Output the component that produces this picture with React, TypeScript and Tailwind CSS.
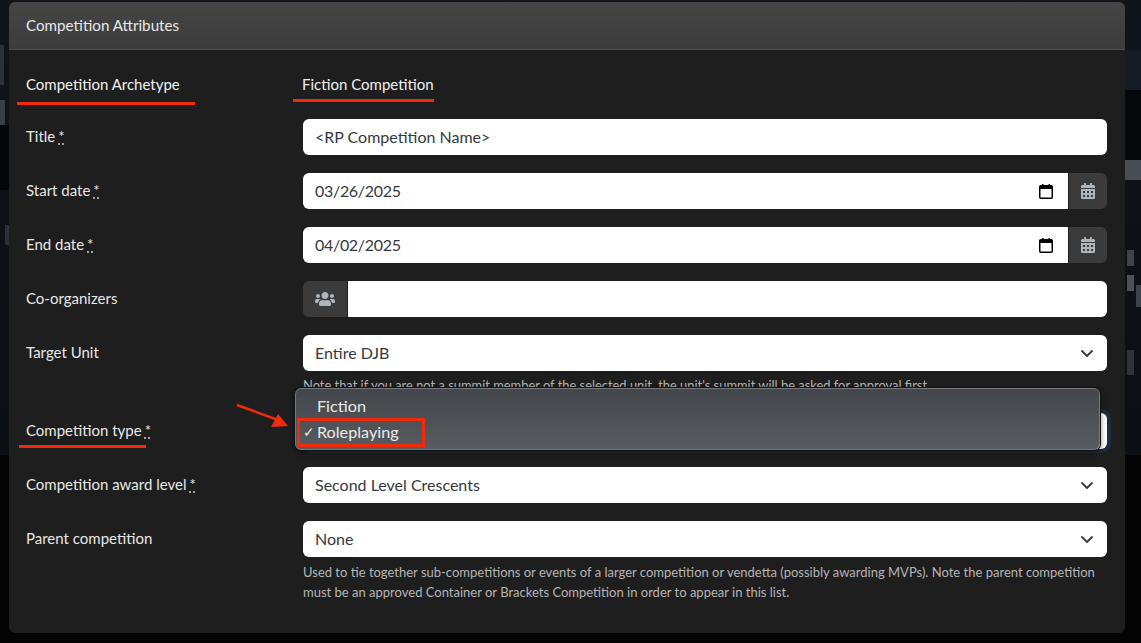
import React from "react";
import { FaCalendarAlt, FaUsers } from "react-icons/fa";

const Req = () => (
  <span className="ml-[3px] underline decoration-dotted decoration-[#cfcfcf] underline-offset-2">*</span>
);

const Chevron = () => (
  <svg
    viewBox="0 0 14 14"
    className="absolute right-[13px] top-[11px] w-[14px] h-[14px] pointer-events-none"
    fill="none"
    stroke="#343a40"
    strokeWidth="1.8"
    strokeLinecap="round"
    strokeLinejoin="round"
  >
    <path d="M2 5l5 5 5-5" />
  </svg>
);

const PickerIcon = () => (
  <svg viewBox="0 0 14 15" className="w-[14px] h-[15px]">
    <path d="M3 0h1.5v2H3zM9.5 0H11v2H9.5z" fill="#000" />
    <rect x="0.75" y="1.75" width="12.5" height="12.5" rx="1" fill="#fff" stroke="#000" strokeWidth="1.5" />
    <rect x="1" y="2" width="12" height="3" fill="#000" />
  </svg>
);

const Row = ({ label, req, children, className = "" }: { label: string; req?: boolean; children: React.ReactNode; className?: string }) => (
  <div className={"grid grid-cols-[278px_804px] " + className}>
    <div className="text-[15px] leading-[22px] pl-px pt-[6px] text-[#e8e8e8]">
      {label}
      {req && <Req />}
    </div>
    <div>{children}</div>
  </div>
);

const SelectBox = ({ value }: { value: string }) => (
  <div className="relative h-[36px] bg-white rounded-[6px] pl-[12px] text-[16px] leading-[36px] text-[#343a40]">
    {value}
    <Chevron />
  </div>
);

const DateRow = ({ value }: { value: string }) => (
  <div className="flex h-[36px]">
    <div className="flex-1 min-w-0 flex items-center justify-between bg-white rounded-l-[6px] pl-[12px] pr-[15px] text-[16px] tracking-[-0.3px] text-[#343a40]">
      {value}
      <PickerIcon />
    </div>
    <div className="w-[38px] ml-px bg-[#3b3b3b] rounded-r-[6px] flex items-center justify-center">
      <FaCalendarAlt className="w-[14px] h-[16px] text-[#adb5bd]" />
    </div>
  </div>
);

export default function App() {
  return (
    <div className="relative w-[1141px] h-[643px] overflow-hidden bg-[#040404] font-['Lato','Noto_Sans',sans-serif]">
      {/* backdrop scraps either side of the card */}
      <div className="absolute left-0 top-0 w-full h-[455px] bg-gradient-to-b from-[#10151b] to-[#0b0e12]" />
      <div className="absolute left-0 top-[45px] w-[4px] h-[40px] bg-[#2b3136]" />
      <div className="absolute left-0 top-[100px] w-[5px] h-[25px] bg-[#3a3f44]" />
      <div className="absolute left-0 top-[125px] w-[9px] h-[65px] bg-[#05070a]" />
      <div className="absolute left-[5px] top-[225px] w-[4px] h-[20px] bg-[#2a3036]" />
      <div className="absolute right-0 top-[50px] w-[16px] h-[40px] bg-[#141b25]" />
      <div className="absolute right-0 top-[90px] w-[16px] h-[70px] bg-[#06080a]" />
      <div className="absolute right-0 top-[160px] w-[16px] h-[20px] bg-[#464e54]" />
      <div className="absolute right-[7px] top-[250px] w-[7px] h-[16px] bg-[#3d4449]" />
      <div className="absolute right-[7px] top-[275px] w-[7px] h-[16px] bg-[#4b5257]" />
      <div className="absolute right-0 top-[285px] w-[5px] h-[22px] bg-[#3d4449]" />
      <div className="absolute right-[7px] top-[350px] w-[7px] h-[25px] bg-[#2d3338]" />

      <div className="relative ml-[9px] mt-[2px] w-[1116px] h-[631px] rounded-[6px] overflow-hidden bg-[#1e1e1e]">
        <div className="h-[48px] pl-[17px] bg-gradient-to-b from-[#454545] to-[#3c3c3c] border-b border-[#4a4a4a] text-[15.2px] leading-[47px] text-[#e8e8e8]">
          Competition Attributes
        </div>

        <div className="pl-[16px] pt-[23px]">
          <div className="grid grid-cols-[278px_804px] h-[46px] text-[15px] leading-[22px] text-[#f0f0f0]">
            <div className="pl-px">Competition Archetype</div>
            <div className="-ml-[1px]">Fiction Competition</div>
          </div>

          <div className="flex flex-col gap-[18px]">
            <Row label="Title" req>
              <div className="h-[36px] bg-white rounded-[6px] pl-[12px] text-[16px] leading-[36px] text-[#343a40]">
                &lt;RP Competition Name&gt;
              </div>
            </Row>
            <Row label="Start date" req>
              <DateRow value="03/26/2025" />
            </Row>
            <Row label="End date" req>
              <DateRow value="04/02/2025" />
            </Row>
            <Row label="Co-organizers">
              <div className="flex h-[36px]">
                <div className="w-[44px] mr-px bg-[#3b3b3b] rounded-l-[6px] flex items-center justify-center">
                  <FaUsers className="w-[20px] h-[16px] text-[#adb5bd]" />
                </div>
                <div className="flex-1 bg-white rounded-r-[6px]" />
              </div>
            </Row>
            <Row label="Target Unit">
              <SelectBox value="Entire DJB" />
              <div className="mt-[5px] h-[17px] text-[12.9px] leading-[18px] text-[#b5b5b5] whitespace-nowrap">
                Note that if you are not a summit member of the selected unit, the unit's summit will be asked for approval first.
              </div>
            </Row>
            <Row label="Competition type" req className="mt-[2px]">
              <div className="h-[36px] bg-white rounded-[6px] shadow-[0_0_0_4px_#1f2c3d]" />
            </Row>
            <Row label="Competition award level" req>
              <SelectBox value="Second Level Crescents" />
            </Row>
            <Row label="Parent competition">
              <SelectBox value="None" />
              <div className="mt-[5px] text-[13px] leading-[20px] text-[#b5b5b5]">
                Used to tie together sub-competitions or events of a larger competition or vendetta (possibly awarding MVPs). Note the parent competition must be an approved Container or Brackets Competition in order to appear in this list.
              </div>
            </Row>
          </div>
        </div>
      </div>

      {/* native select popup, open over the type field */}
      <div className="absolute left-[295px] top-[388px] w-[805px] h-[62px] rounded-[6px] border border-[#77797c] bg-gradient-to-b from-[#43474b] to-[#585c60] shadow-[0_0_0_1px_#111,0_2px_6px_rgba(0,0,0,0.6)] text-[16.2px] leading-[26px] text-[#ebebeb] pt-[4px]">
        <div className="pl-[21px]">Fiction</div>
        <div className="flex">
          <span className="w-[21px] pl-[7px] text-[14px]">✓</span>
          <span>Roleplaying</span>
        </div>
      </div>

      {/* red annotations */}
      <div className="absolute left-[17px] top-[102px] w-[178px] h-[3px] bg-[#f02a0c]" />
      <div className="absolute left-[293px] top-[99px] w-[141px] h-[3px] bg-[#f02a0c]" />
      <div className="absolute left-[19px] top-[445px] w-[127px] h-[3px] bg-[#f02a0c]" />
      <div className="absolute left-[297px] top-[418px] w-[128px] h-[29px] border-[3px] border-[#f02a0c]" />
      <svg className="absolute left-[232px] top-[400px] w-[60px] h-[34px]" viewBox="0 0 60 34">
        <path d="M5 5L46 20" stroke="#f02a0c" strokeWidth="2.5" />
        <path d="M56 26L46 14L39 27Z" fill="#f02a0c" />
      </svg>
    </div>
  );
}
